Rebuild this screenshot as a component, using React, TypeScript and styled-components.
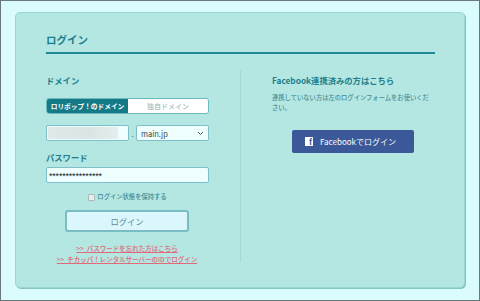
import React from "react"
import styled, { createGlobalStyle } from "styled-components"

const GlobalStyle = createGlobalStyle`
  html, body { margin: 0; padding: 0; }
  body {
    background: #dbfcfd;
    font-family: "Noto Sans CJK JP", "Noto Sans", sans-serif;
  }
`

const Frame = styled.div`
  width: 480px;
  height: 301px;
  box-sizing: border-box;
  border: 1px solid #6b7878;
  background: #dbfcfd;
  padding: 11px 0 0 14px;
`

const Card = styled.div`
  width: 450px;
  height: 276px;
  box-sizing: border-box;
  background: #b4e6e2;
  border: 1px solid #9ad6d4;
  border-radius: 5px;
  box-shadow: 1px 1px 0 #84c4c3;
  padding: 0 29px 0 30px;
`

const Header = styled.h1`
  margin: 0;
  padding: 20px 0 5px;
  font-size: 10.5px;
  line-height: 14px;
  font-weight: 700;
  color: #1b7f8c;
  border-bottom: 2px solid #1f8a96;
`

const Columns = styled.div`
  display: grid;
  grid-template-columns: 194px 1fr;
  margin-top: 16px;
`

const LeftCol = styled.div`
  padding-top: 4px;
  display: flex;
  flex-direction: column;
`

const RightCol = styled.div`
  padding: 4px 0 0 31px;
  border-left: 1px solid #a3d9d5;
  height: 188px;
`

const Label = styled.div<{ $top?: number }>`
  margin-top: ${(p) => p.$top ?? 0}px;
  font-size: 8.3px;
  line-height: 12px;
  font-weight: 700;
  color: #1b7f8c;
`

const Tabs = styled.div`
  margin-top: 12px;
  width: 163px;
  height: 16px;
  box-sizing: border-box;
  border: 1px solid #6cb9bf;
  border-radius: 3px;
  overflow: hidden;
  display: grid;
  grid-template-columns: 81px 1fr;
`

const Tab = styled.div<{ $active?: boolean }>`
  display: flex;
  align-items: center;
  justify-content: center;
  font-size: ${(p) => (p.$active ? 6.7 : 7)}px;
  font-weight: ${(p) => (p.$active ? 700 : 400)};
  color: ${(p) => (p.$active ? "#ffffff" : "#94b0b4")};
  background: ${(p) => (p.$active ? "#157a87" : "#ffffff")};
  white-space: nowrap;
`

const InputRow = styled.div<{ $top: number }>`
  margin-top: ${(p) => p.$top}px;
  display: flex;
  align-items: center;
  height: 16px;
`

const Field = styled.div<{ $width: number }>`
  width: ${(p) => p.$width}px;
  height: 16px;
  box-sizing: border-box;
  background: #effefe;
  border: 1px solid #7ec0c8;
  border-radius: 2px;
  display: flex;
  align-items: center;
  padding: 0 1px;
`

const Blur = styled.span`
  width: 70px;
  height: 12px;
  background: linear-gradient(90deg, #dfe9e9 0%, #d9e5e4 60%, #e6eeee 100%);
`

const Dot = styled.span`
  width: 7px;
  text-align: center;
  font-size: 8px;
  color: #4d7a80;
`

const SelectText = styled.span`
  flex: 1;
  padding-left: 3px;
  font-size: 7.5px;
  color: #2f4a4e;
`

const PasswordText = styled.span`
  padding-left: 1px;
  font-family: "Liberation Sans", sans-serif;
  font-size: 9px;
  letter-spacing: -0.2px;
  color: #222;
  line-height: 1;
  padding-top: 3px;
`

const Keep = styled.label`
  margin-top: 9px;
  align-self: center;
  margin-left: -31px;
  display: flex;
  align-items: center;
  gap: 2px;
  font-size: 6.3px;
  font-weight: 500;
  line-height: 10px;
  color: #3d8a90;
`

const Box = styled.span`
  width: 5px;
  height: 5px;
  border: 1px solid #aab8b8;
  background: #e6eeee;
  border-radius: 1px;
`

const LoginButton = styled.button`
  margin: 8px 0 0 19px;
  width: 124px;
  height: 22px;
  box-sizing: border-box;
  background: #dcf6fd;
  border: 2px solid #78bcc4;
  border-radius: 3px;
  font-family: inherit;
  font-size: 8.3px;
  color: #5e8c94;
  padding: 0;
`

const LinkText = styled.a<{ $top: number }>`
  margin-top: ${(p) => p.$top}px;
  align-self: center;
  margin-left: -32px;
  font-size: 6.5px;
  font-weight: 500;
  line-height: 10.5px;
  color: #e2687a;
  text-decoration: underline;
  white-space: nowrap;
`

const Desc = styled.p`
  margin: 7px 0 0;
  width: 158px;
  font-size: 6.3px;
  font-weight: 500;
  line-height: 10px;
  color: #4a9098;
`

const FbButton = styled.button`
  margin: 17px 0 0 20px;
  width: 122px;
  height: 23px;
  background: #3b5998;
  border: none;
  border-radius: 2px;
  color: #fff;
  font-family: "Noto Sans CJK JP", "Noto Sans", sans-serif;
  font-size: 8px;
  display: flex;
  align-items: center;
  gap: 7px;
  padding: 0 0 0 13px;
`

const FbIcon = styled.span`
  width: 8px;
  height: 9px;
  background: #fff;
  color: #3b5998;
  font-family: "Liberation Sans", sans-serif;
  font-weight: 700;
  font-size: 9px;
  line-height: 11px;
  display: flex;
  justify-content: flex-end;
  overflow: hidden;
  padding-right: 1px;
  box-sizing: border-box;
`

const Chevron = () => (
  <svg width="7" height="5" viewBox="0 0 7 5" style={{ marginRight: 3 }}>
    <path d="M1 1 L3.5 3.5 L6 1" fill="none" stroke="#4a5a5c" strokeWidth="1" />
  </svg>
)

export default function App() {
  return (
    <>
      <GlobalStyle />
      <Frame>
        <Card>
          <Header>ログイン</Header>
          <Columns>
            <LeftCol>
              <Label>ドメイン</Label>
              <Tabs>
                <Tab $active>ロリポップ！のドメイン</Tab>
                <Tab>独自ドメイン</Tab>
              </Tabs>
              <InputRow $top={11}>
                <Field $width={83}>
                  <Blur />
                </Field>
                <Dot>.</Dot>
                <Field $width={73}>
                  <SelectText>main.jp</SelectText>
                  <Chevron />
                </Field>
              </InputRow>
              <Label $top={10}>パスワード</Label>
              <InputRow $top={4}>
                <Field $width={163}>
                  <PasswordText>****************</PasswordText>
                </Field>
              </InputRow>
              <Keep>
                <Box />
                ログイン状態を保持する
              </Keep>
              <LoginButton>ログイン</LoginButton>
              <LinkText $top={11}>&gt;&gt;&nbsp; パスワードを忘れた方はこちら</LinkText>
              <LinkText $top={0}>&gt;&gt;&nbsp; チカッパ！レンタルサーバーのIDでログイン</LinkText>
            </LeftCol>
            <RightCol>
              <Label>Facebook連携済みの方はこちら</Label>
              <Desc>連携していない方は左のログインフォームをお使いください。</Desc>
              <FbButton>
                <FbIcon>f</FbIcon>
                Facebookでログイン
              </FbButton>
            </RightCol>
          </Columns>
        </Card>
      </Frame>
    </>
  )
}
